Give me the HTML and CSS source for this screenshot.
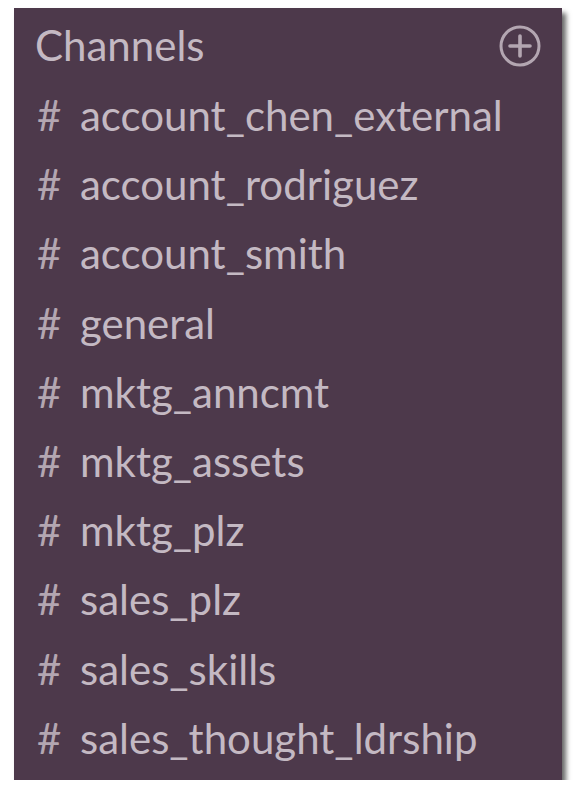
FILE: index.html
```html
<!DOCTYPE html>
<html lang="en">
<head>
<meta charset="utf-8">
<title>Channels</title>
<link rel="stylesheet" href="styles.css">
</head>
<body>
<div class="sidebar">
  <div class="header">
    <span class="header-title">Channels</span>
    <svg class="add-icon" viewBox="0 0 42 42" width="42" height="42" aria-hidden="true">
      <circle cx="21" cy="21" r="19" fill="none" stroke="currentColor" stroke-width="3"/>
      <path d="M21 11V31M11 21H31" stroke="currentColor" stroke-width="3.6" stroke-linecap="round"/>
    </svg>
  </div>
  <ul class="channel-list">
    <li class="channel"><span class="hash">#</span><span class="name">account_chen_external</span></li>
    <li class="channel"><span class="hash">#</span><span class="name">account_rodriguez</span></li>
    <li class="channel"><span class="hash">#</span><span class="name">account_smith</span></li>
    <li class="channel"><span class="hash">#</span><span class="name">general</span></li>
    <li class="channel"><span class="hash">#</span><span class="name">mktg_anncmt</span></li>
    <li class="channel"><span class="hash">#</span><span class="name">mktg_assets</span></li>
    <li class="channel"><span class="hash">#</span><span class="name">mktg_plz</span></li>
    <li class="channel"><span class="hash">#</span><span class="name">sales_plz</span></li>
    <li class="channel"><span class="hash">#</span><span class="name">sales_skills</span></li>
    <li class="channel"><span class="hash">#</span><span class="name">sales_thought_ldrship</span></li>
  </ul>
</div>
</body>
</html>
```
FILE: styles.css
```css
html, body {
  margin: 0;
  padding: 0;
  background: #ffffff;
}

body {
  padding: 8px 0 0 14px;
  font-family: Lato, "Open Sans", sans-serif;
}

.sidebar {
  width: 548px;
  height: 772px;
  box-sizing: border-box;
  padding-top: 3px;
  background: #4d394b;
  color: #c4b9c3;
  box-shadow: 4px 5px 5px rgba(0, 0, 0, 0.6);
}

.header {
  display: flex;
  align-items: center;
  justify-content: space-between;
  height: 69px;
  padding: 0 21px 0 21px;
}

.header-title {
  font-size: 42px;
  line-height: 69px;
}

.add-icon {
  display: block;
  color: #b3a6b1;
  margin-top: 1px;
}

.channel-list {
  list-style: none;
  margin: 1px 0 0 0;
  padding: 0;
}

.channel {
  display: flex;
  font-size: 42px;
  line-height: 69.2px;
  padding-left: 23px;
}

.hash {
  width: 43px;
  color: #b3a6b1;
}

.name {
  white-space: nowrap;
}
```
